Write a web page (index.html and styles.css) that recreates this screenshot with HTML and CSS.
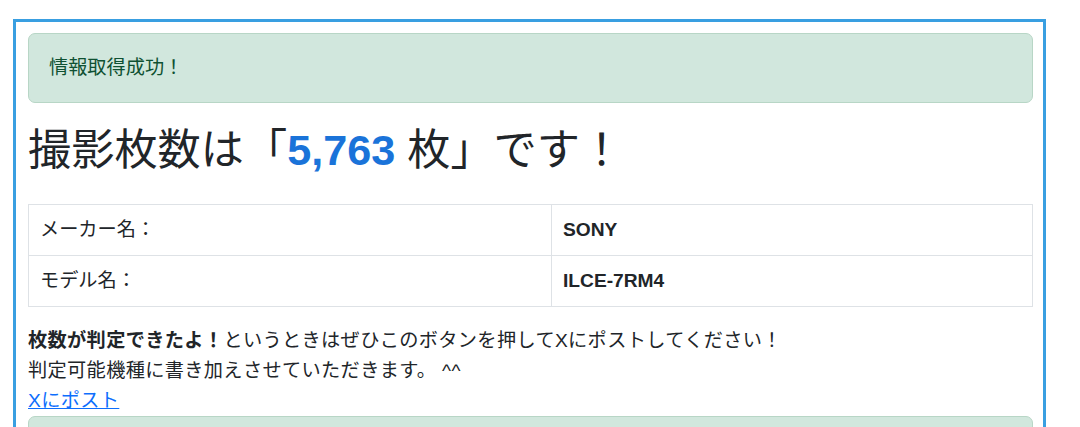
FILE: index.html
```html
<!DOCTYPE html>
<html lang="ja">
<head>
<meta charset="utf-8">
<title>撮影枚数</title>
<link rel="stylesheet" href="styles.css">
</head>
<body>
<div class="frame">
  <div class="alert">情報取得成功！</div>
  <h1 class="count">撮影枚数は「<span class="num">5,763</span> 枚」です！</h1>
  <table class="info">
    <tr><td class="label">メーカー名：</td><td class="value">SONY</td></tr>
    <tr><td class="label">モデル名：</td><td class="value">ILCE-7RM4</td></tr>
  </table>
  <p class="note"><strong>枚数が判定できたよ！</strong>というときはぜひこのボタンを押してXにポストしてください！<br>判定可能機種に書き加えさせていただきます。 ^^<br><a href="#" class="post">Xにポスト</a></p>
  <div class="alert next">&nbsp;</div>
</div>
</body>
</html>
```

FILE: styles.css
```css
html, body {
  margin: 0;
  padding: 0;
  background: #ffffff;
  overflow: hidden;
}
body {
  font-family: "Liberation Sans", "Noto Sans CJK JP", sans-serif;
  color: #212529;
  font-size: 19.2px;
  line-height: 28.8px;
}
.frame {
  box-sizing: border-box;
  margin: 19px 0 0 13px;
  width: 1033px;
  height: 408px;
  overflow: hidden;
  border: 3px solid #399fe1;
  border-bottom: none;
  padding: 11px 10px 0 12px;
}
.alert {
  box-sizing: border-box;
  background: #d1e7dd;
  border: 1px solid #b8d6c6;
  border-radius: 7px;
  color: #0f5132;
  padding: 20px 20px;
  line-height: 28px;
  height: 70px;
  margin-bottom: 21px;
}
.alert.next {
  margin-bottom: 0;
}
.count {
  margin: 0 0 28px;
  font-size: 43.2px;
  font-weight: normal;
  line-height: 52px;
  letter-spacing: 0;
}
.num {
  color: #1a73d9;
  font-weight: bold;
}
.info {
  width: 100%;
  border-collapse: collapse;
  margin: 0;
}
.info td {
  border: 1px solid #dee2e6;
  padding: 11px 11px 10px;
  line-height: 28.8px;
}
.info .label {
  width: 500px;
}
.info .value {
  font-weight: bold;
}
.note {
  margin: 19px 0 0;
  line-height: 30px;
  letter-spacing: 0.35px;
}
.note strong {
  font-weight: bold;
}
.post {
  color: #0d6efd;
  text-decoration: underline;
}
```
